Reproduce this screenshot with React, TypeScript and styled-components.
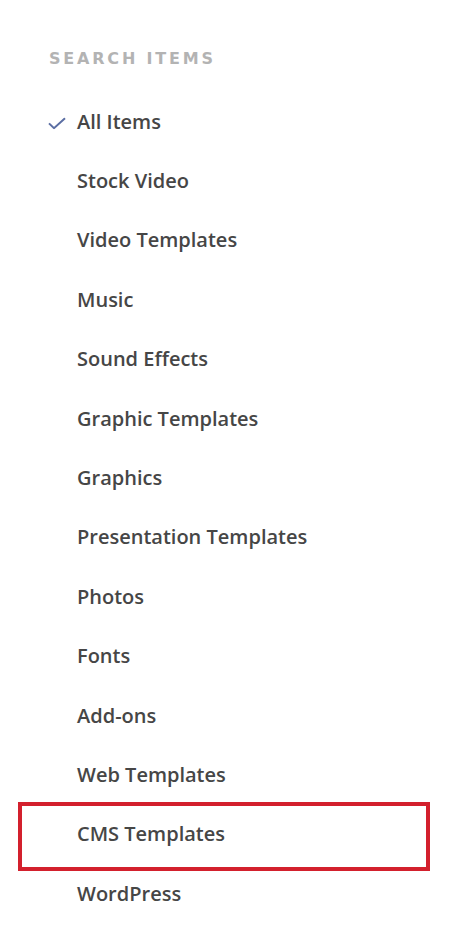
import React from "react";
import styled, { createGlobalStyle } from "styled-components";

const Global = createGlobalStyle`
  html, body { margin: 0; padding: 0; background: #ffffff; }
  body { font-family: "Open Sans", "Liberation Sans", sans-serif; }
`;

const Panel = styled.nav`
  width: 449px;
  min-height: 934px;
  box-sizing: border-box;
  padding: 48px 0 0 19px;
  background: #fff;
`;

const Heading = styled.h3`
  margin: 0 0 0 30px;
  font-family: "DejaVu Sans", "Liberation Sans", sans-serif;
  font-weight: 700;
  font-size: 16px;
  line-height: 22px;
  letter-spacing: 2.8px;
  color: #b3b3b3;
  text-transform: uppercase;
`;

const List = styled.ul`
  list-style: none;
  margin: 22px 0 0 0;
  padding: 0;
  display: flex;
  flex-direction: column;
`;

const Item = styled.li<{ $highlight?: boolean }>`
  box-sizing: border-box;
  width: 410px;
  height: 59.4px;
  display: flex;
  align-items: center;
  position: relative;
  padding-left: 58px;

  ${(p) =>
    p.$highlight &&
    `
    &::after {
      content: "";
      position: absolute;
      left: -1px;
      right: -1px;
      top: -3px;
      bottom: -7px;
      border: 4px solid #d3202d;
      pointer-events: none;
    }
  `}
`;

const Label = styled.span`
  font-family: "Open Sans", "Liberation Sans", sans-serif;
  font-weight: 600;
  font-size: 20px;
  color: #464646;
  line-height: 1;
`;

const Check = styled.svg`
  position: absolute;
  left: 29px;
  top: 50%;
  transform: translateY(-40%);
`;

const items = [
  "All Items",
  "Stock Video",
  "Video Templates",
  "Music",
  "Sound Effects",
  "Graphic Templates",
  "Graphics",
  "Presentation Templates",
  "Photos",
  "Fonts",
  "Add-ons",
  "Web Templates",
  "CMS Templates",
  "WordPress",
];

export default function App() {
  return (
    <>
      <Global />
      <Panel>
        <Heading>Search Items</Heading>
        <List>
          {items.map((name, i) => (
            <Item key={name} $highlight={name === "CMS Templates"}>
              {i === 0 && (
                <Check width="18" height="12" viewBox="0 0 18 12">
                  <path d="M1 6.2 L6 11 L17 1" fill="none" stroke="#5b6ea3" strokeWidth="2" />
                </Check>
              )}
              <Label>{name}</Label>
            </Item>
          ))}
        </List>
      </Panel>
    </>
  );
}
